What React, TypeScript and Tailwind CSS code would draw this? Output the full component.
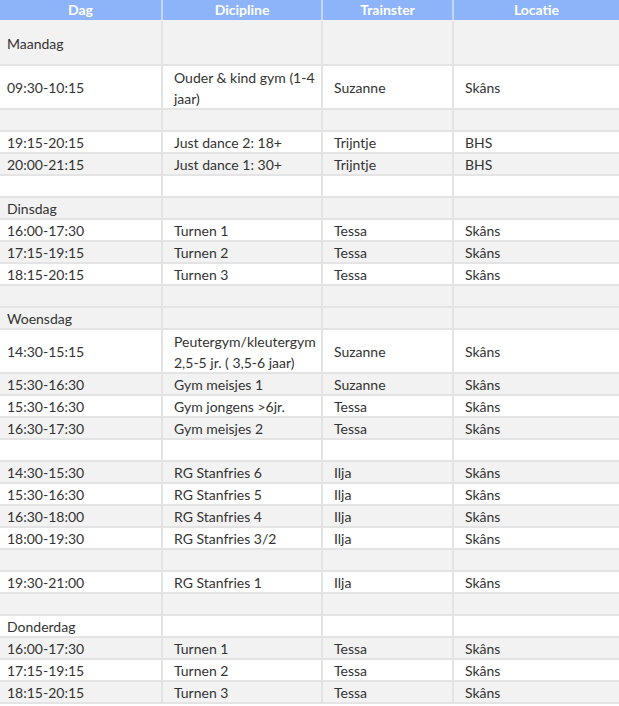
type Row = {
  cells: [string, string, string, string];
  grey: boolean;
  tall?: boolean;
};

const rows: Row[] = [
  { cells: ['Maandag', '', '', ''], grey: true, tall: true },
  { cells: ['09:30-10:15', 'Ouder & kind gym (1-4\njaar)', 'Suzanne', 'Skâns'], grey: false, tall: true },
  { cells: ['', '', '', ''], grey: true },
  { cells: ['19:15-20:15', 'Just dance 2: 18+', 'Trijntje', 'BHS'], grey: false },
  { cells: ['20:00-21:15', 'Just dance 1: 30+', 'Trijntje', 'BHS'], grey: true },
  { cells: ['', '', '', ''], grey: false },
  { cells: ['Dinsdag', '', '', ''], grey: true },
  { cells: ['16:00-17:30', 'Turnen 1', 'Tessa', 'Skâns'], grey: false },
  { cells: ['17:15-19:15', 'Turnen 2', 'Tessa', 'Skâns'], grey: true },
  { cells: ['18:15-20:15', 'Turnen 3', 'Tessa', 'Skâns'], grey: false },
  { cells: ['', '', '', ''], grey: true },
  { cells: ['Woensdag', '', '', ''], grey: true },
  { cells: ['14:30-15:15', 'Peutergym/kleutergym\n2,5-5 jr. ( 3,5-6 jaar)', 'Suzanne', 'Skâns'], grey: false, tall: true },
  { cells: ['15:30-16:30', 'Gym meisjes 1', 'Suzanne', 'Skâns'], grey: true },
  { cells: ['15:30-16:30', 'Gym jongens >6jr.', 'Tessa', 'Skâns'], grey: false },
  { cells: ['16:30-17:30', 'Gym meisjes 2', 'Tessa', 'Skâns'], grey: true },
  { cells: ['', '', '', ''], grey: false },
  { cells: ['14:30-15:30', 'RG Stanfries 6', 'Ilja', 'Skâns'], grey: true },
  { cells: ['15:30-16:30', 'RG Stanfries 5', 'Ilja', 'Skâns'], grey: false },
  { cells: ['16:30-18:00', 'RG Stanfries 4', 'Ilja', 'Skâns'], grey: true },
  { cells: ['18:00-19:30', 'RG Stanfries 3/2', 'Ilja', 'Skâns'], grey: false },
  { cells: ['', '', '', ''], grey: true },
  { cells: ['19:30-21:00', 'RG Stanfries 1', 'Ilja', 'Skâns'], grey: false },
  { cells: ['', '', '', ''], grey: true },
  { cells: ['Donderdag', '', '', ''], grey: false },
  { cells: ['16:00-17:30', 'Turnen 1', 'Tessa', 'Skâns'], grey: true },
  { cells: ['17:15-19:15', 'Turnen 2', 'Tessa', 'Skâns'], grey: false },
  { cells: ['18:15-20:15', 'Turnen 3', 'Tessa', 'Skâns'], grey: true },
];

const widths = ['w-[161px]', 'w-[160px] border-l-2', 'w-[131px] border-l-2', 'flex-1 border-l-2'];
const pads = ['pl-[7px]', 'pl-[11px]', 'pl-[11px]', 'pl-[11px]'];

const CellText = ({ text }: { text: string }) => {
  const lines = text.split('\n');
  return (
    <span className={lines.length > 1 ? 'leading-[21px]' : 'leading-[20px]'}>
      {lines.map((line, i) => (
        <span key={i} className="block">
          {line}
        </span>
      ))}
    </span>
  );
};

const App = () => {
  return (
    <div className="w-[619px] h-[706px] overflow-hidden bg-white font-['Lato','Noto_Sans',sans-serif] text-[14px] text-[#333]">
      {/* Header */}
      <div className="flex h-[21px] bg-[#8db4f8] border-b border-[#eef1f8] text-white font-bold text-[14px]">
        {['Dag', 'Dicipline', 'Trainster', 'Locatie'].map((h, i) => (
          <div
            key={h}
            className={`${widths[i]} border-[#c3d7fb] flex items-center justify-center leading-[20px]`}
          >
            {h}
          </div>
        ))}
      </div>

      {/* Body */}
      {rows.map((row, r) => (
        <div
          key={r}
          className={`flex border-b-2 border-[#e4e4e4] ${row.grey ? 'bg-[#f2f2f2]' : 'bg-white'} ${
            row.tall ? (r === 0 ? 'h-[45px]' : 'h-[44px]') : 'h-[22px]'
          }`}
        >
          {row.cells.map((c, i) => (
            <div
              key={i}
              className={`${widths[i]} ${pads[i]} pt-[2px] border-[#e4e4e4] flex items-center whitespace-nowrap`}
            >
              <CellText text={c} />
            </div>
          ))}
        </div>
      ))}
    </div>
  );
};

export default App;
